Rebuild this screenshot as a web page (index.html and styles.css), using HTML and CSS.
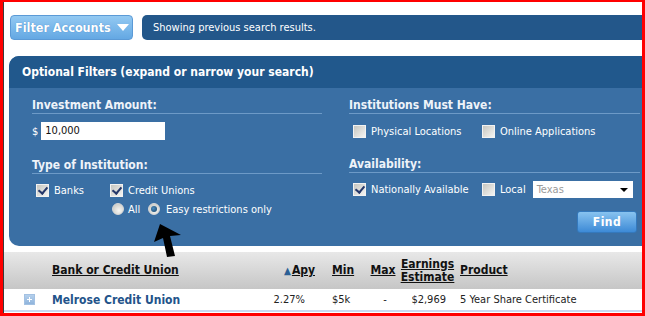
FILE: index.html
```html
<!DOCTYPE html>
<html>
<head>
<meta charset="utf-8">
<title>Filter Accounts</title>
<link rel="stylesheet" href="styles.css">
</head>
<body>
<div class="frame">
	<div class="topbar">
		<div class="filterBtn">Filter Accounts <span class="caret"></span></div>
		<div class="status">Showing previous search results.</div>
	</div>

	<div class="panel">
		<div class="panelHead">Optional Filters (expand or narrow your search)</div>
		<div class="panelBody">
			<div class="col">
				<div class="heading">Investment Amount:</div>
				<div class="amountRow">
					<span class="dollar">$</span>
					<span class="amount">10,000</span>
				</div>
				<div class="heading second">Type of Institution:</div>
				<div class="optRow">
					<span class="opt wBanks"><span class="cb on"></span>Banks</span>
					<span class="opt"><span class="cb on"></span>Credit Unions</span>
				</div>
				<div class="optRow radios">
					<span class="opt wAll"><span class="rb"></span>All</span>
					<span class="opt"><span class="rb on"></span>Easy restrictions only</span>
				</div>
			</div>
			<div class="col right">
				<div class="heading">Institutions Must Have:</div>
				<div class="optRow first">
					<span class="opt wLeft"><span class="cb"></span>Physical Locations</span>
					<span class="opt"><span class="cb"></span>Online Applications</span>
				</div>
				<div class="heading second">Availability:</div>
				<div class="optRow">
					<span class="opt wLeft"><span class="cb on"></span>Nationally Available</span>
					<span class="opt"><span class="cb"></span>Local</span>
					<span class="select">Texas<span class="selArrow"></span></span>
				</div>
				<div class="findRow"><span class="findBtn">Find</span></div>
			</div>
		</div>
	</div>

	<div class="grid head">
		<div></div>
		<div class="c-name"><u>Bank or Credit Union</u></div>
		<div class="c-apy"><span class="up">&#9650;</span><u>Apy</u></div>
		<div class="c-min"><u>Min</u></div>
		<div class="c-max"><u>Max</u></div>
		<div class="c-earn"><u>Earnings<br>Estimate</u></div>
		<div class="c-prod"><u>Product</u></div>
	</div>
	<div class="grid row">
		<div class="c-icon"><span class="plus"></span></div>
		<div class="c-name bank">Melrose Credit Union</div>
		<div class="c-apy val">2.27%</div>
		<div class="c-min val">$5k</div>
		<div class="c-max val">-</div>
		<div class="c-earn val">$2,969</div>
		<div class="c-prod val">5 Year Share Certificate</div>
	</div>

	<svg class="arrow" width="40" height="40" viewBox="0 0 40 40">
		<path d="M10 2 L4 20 L13 16 L17 35 L25 34 L20 14 L31 13 Z" fill="#000"/>
	</svg>
</div>
</body>
</html>
```

FILE: styles.css
```css
* {
	margin:0;
	padding:0;
	box-sizing:border-box;
}
body {
	font-family:"DejaVu Sans Condensed","DejaVu Sans",sans-serif;
	font-size:11px;
	color:#fff;
	background:#fff;
}
.frame {
	position:relative;
	width:645px;
	height:316px;
	border:3px solid #f00;
	border-top-width:2px;
	background:#fff;
	overflow:hidden;
}
.frame:before {
	content:"";
	position:absolute;
	left:0;
	top:0;
	bottom:0;
	width:1px;
	background:#3b3b3b;
}

/* top bar */
.topbar {
	display:flex;
	height:25px;
	margin:13px 0 0 7px;
}
.filterBtn {
	width:123px;
	margin-right:9px;
	border:1px solid #5b9ad6;
	border-radius:4px;
	background:linear-gradient(#93c9f2,#64a8e3);
	font-weight:bold;
	font-size:12.5px;
	line-height:23px;
	padding-left:4px;
	white-space:nowrap;
	text-shadow:0 0 1px #3d7fc0;
}
.caret {
	display:inline-block;
	width:0;
	height:0;
	border-left:6px solid transparent;
	border-right:6px solid transparent;
	border-top:7px solid #fff;
	vertical-align:1px;
	margin-left:2px;
}
.status {
	flex:1;
	background:#23578a;
	border-radius:5px 0 0 5px;
	line-height:25px;
	padding-left:11px;
}

/* filter panel */
.panel {
	margin:16px 0 0 6px;
	border-radius:10px 0 0 10px;
	overflow:hidden;
	background:#3a6fa4;
}
.panelHead {
	height:32px;
	background:#21588c;
	font-weight:bold;
	font-size:12px;
	line-height:32px;
	padding-left:13px;
}
.panelBody {
	display:flex;
	gap:27px;
	height:158px;
	padding:9px 2px 0 23px;
}
.col {
	width:290px;
}
.col.right {
	flex:1;
}
.heading {
	font-weight:bold;
	font-size:12px;
	line-height:16px;
	color:#eef3f9;
	border-bottom:1px solid #6d9ac7;
}
.heading.second {
	margin-top:17px;
}
.amountRow {
	display:flex;
	align-items:center;
	gap:3px;
	margin-top:8px;
	height:18px;
}
.amount {
	width:124px;
	height:18px;
	background:#fff;
	color:#111;
	line-height:18px;
	padding-left:4px;
}
.optRow {
	display:flex;
	align-items:center;
	height:16px;
	margin-top:8px;
	padding-left:4px;
}
.optRow.first {
	margin-top:9px;
}
.optRow.radios {
	margin-top:3px;
	padding-left:80px;
}
.opt {
	display:flex;
	align-items:center;
	white-space:nowrap;
}
.wBanks { width:74px; }
.wAll { width:36px; }
.wLeft { width:129px; }
.cb {
	width:13px;
	height:13px;
	margin-right:5px;
	border:1px solid #f2f2f2;
	background:linear-gradient(135deg,#c6c6c0,#f4f4f2);
	position:relative;
}
.cb.on:after {
	content:"";
	position:absolute;
	left:3px;
	top:0;
	width:4px;
	height:7px;
	border:solid #25386a;
	border-width:0 2px 2px 0;
	transform:rotate(40deg);
}
.rb {
	width:12px;
	height:12px;
	margin-right:4px;
	border-radius:50%;
	border:1px solid #d8d8d8;
	background:radial-gradient(circle at 60% 65%,#f6f6f4,#c2c2bc);
	position:relative;
}
.rb.on {
	margin-right:6px;
}
.rb.on:after {
	content:"";
	position:absolute;
	left:2px;
	top:2px;
	width:6px;
	height:6px;
	border-radius:50%;
	background:radial-gradient(circle at 40% 40%,#4d8dbf,#123f66);
}
.select {
	position:relative;
	width:100px;
	height:17px;
	margin-left:7px;
	background:#fff;
	color:#9a9a9a;
	line-height:17px;
	padding-left:4px;
}
.selArrow {
	position:absolute;
	right:5px;
	top:7px;
	border-left:4px solid transparent;
	border-right:4px solid transparent;
	border-top:4px solid #000;
}
.findRow {
	display:flex;
	justify-content:flex-end;
	margin-top:14px;
	padding-right:3px;
}
.findBtn {
	width:60px;
	height:22px;
	border-radius:3px;
	background:linear-gradient(#88c3f0,#3d8ad6);
	border:1px solid #3479bd;
	font-weight:bold;
	font-size:12px;
	text-align:center;
	line-height:20px;
	letter-spacing:0.5px;
}

/* results table */
.grid {
	display:grid;
	grid-template-columns:45px 221px 50px 42px 36px 59px 1fr;
	color:#111;
	margin-left:1px;
}
.grid.head {
	margin-top:6px;
	height:37px;
	background:linear-gradient(#e8e8e8,#c6c6c6);
	font-weight:bold;
	font-size:12px;
	align-items:center;
	line-height:13px;
}
.grid.row {
	height:23px;
	align-items:center;
	border-bottom:2px solid #c8d9ef;
}
.c-name { padding-left:3px; }
.c-apy { text-align:right; padding-right:5px; }
.c-apy.val { padding-right:15px; }
.c-min { padding-left:12px; }
.c-max { text-align:center; padding-left:6px; }
.c-max.val { padding-left:10px; }
.c-earn { text-align:center; }
.c-earn.val { text-align:right; padding-right:11px; }
.c-prod { padding-left:3px; }
.up {
	color:#2b5f95;
	font-size:10px;
	margin-right:1px;
}
.val {
	color:#222;
}
.bank {
	color:#23538a;
	font-weight:bold;
	font-size:12px;
}
.c-icon {
	padding-left:20px;
	display:flex;
	align-items:center;
}
.plus {
	position:relative;
	width:11px;
	height:11px;
	background:linear-gradient(#b5d0ec,#8fb4dc);
	border:1px solid #a3c1e2;
}
.plus:before,.plus:after {
	content:"";
	position:absolute;
	background:#fff;
}
.plus:before { left:2px; top:4px; width:5px; height:1px; }
.plus:after { left:4px; top:2px; width:1px; height:5px; }

/* hand drawn arrow over the form */
.arrow {
	position:absolute;
	left:147px;
	top:220px;
}
```
